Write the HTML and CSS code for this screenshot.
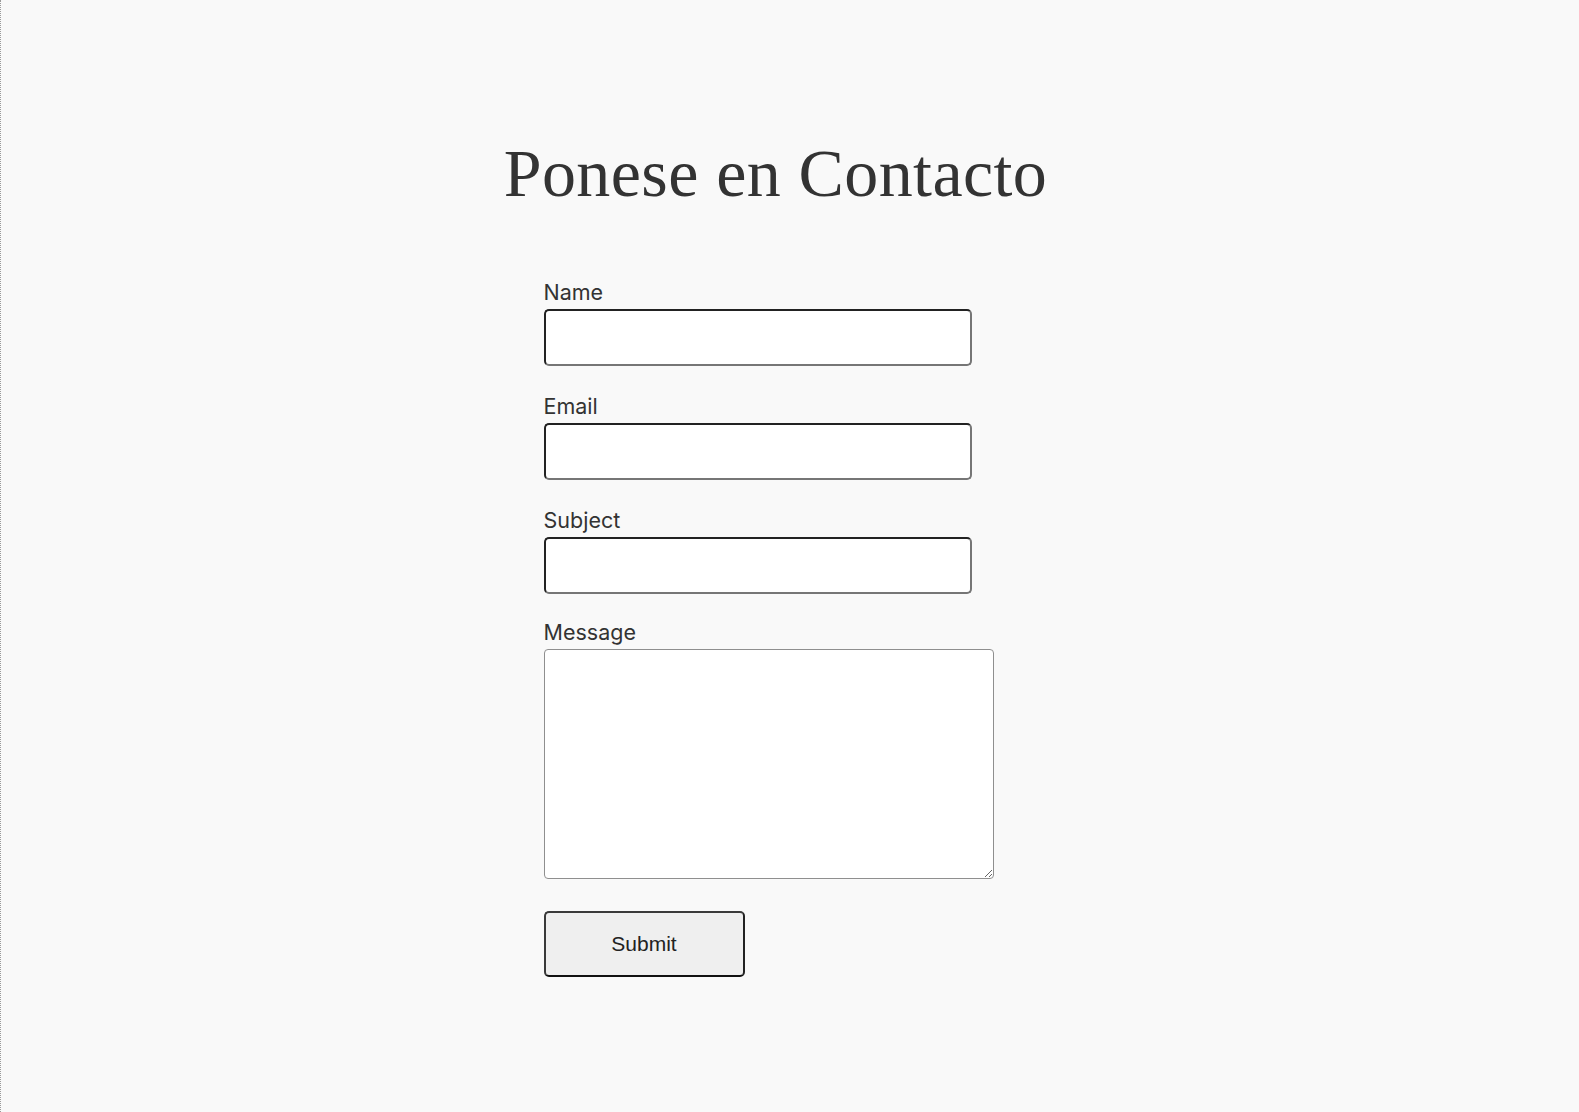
FILE: index.html
```html
<!DOCTYPE html>
<html lang="es">
<head>
<meta charset="utf-8">
<title>Contacto</title>
<link rel="stylesheet" href="styles.css">
</head>
<body>
<main class="page">
  <h1 class="title">Ponese en Contacto</h1>
  <form class="form">
    <div class="field">
      <label class="label" for="name">Name</label>
      <input class="input" id="name" type="text">
    </div>
    <div class="field">
      <label class="label" for="email">Email</label>
      <input class="input" id="email" type="email">
    </div>
    <div class="field field-tight">
      <label class="label" for="subject">Subject</label>
      <input class="input" id="subject" type="text">
    </div>
    <div class="field field-last">
      <label class="label" for="message">Message</label>
      <textarea class="textarea" id="message"></textarea>
    </div>
    <button class="submit" type="submit">Submit</button>
  </form>
</main>
</body>
</html>
```
FILE: styles.css
```css
html, body {
  margin: 0;
  padding: 0;
  height: 100%;
}
body {
  background: #f9f9f9;
  border-left: 1px dotted #9a9a9a;
  box-sizing: border-box;
  color: #333;
}
.page {
  width: 500px;
  margin: 0 auto;
  padding: 134px 29px 0 0;
  display: flex;
  flex-direction: column;
}
.title {
  align-self: center;
  margin: 0;
  white-space: nowrap;
  font-family: "Liberation Serif", serif;
  font-weight: 400;
  font-size: 68px;
  line-height: 78px;
  letter-spacing: 0.4px;
  text-align: center;
  color: #333;
}
.form {
  margin-top: 69px;
  padding-left: 18px;
  display: flex;
  flex-direction: column;
}
.field {
  display: flex;
  flex-direction: column;
  align-items: flex-start;
  gap: 6px;
  margin-bottom: 29px;
}
.field-tight {
  margin-bottom: 27px;
}
.field-last {
  margin-bottom: 32px;
}
.label {
  font-family: Inter, "Noto Sans", sans-serif;
  font-size: 21.5px;
  line-height: 22px;
  color: #333;
}
.input {
  box-sizing: border-box;
  width: 428px;
  height: 57px;
  margin: 0;
  background: #fff;
  border: 2px solid;
  border-color: #222 #767676 #767676 #222;
  border-radius: 5px;
  outline: none;
}
.textarea {
  box-sizing: border-box;
  width: 450px;
  height: 230px;
  margin: 0;
  background: #fff;
  border: 1px solid #8f8f8f;
  border-radius: 4px;
  resize: both;
}
.submit {
  box-sizing: border-box;
  width: 201px;
  height: 66px;
  background: #efefef;
  border: 2px solid #222;
  border-color: #3a3a3a #222 #111 #3a3a3a;
  border-radius: 5px;
  font-family: "Liberation Sans", Arial, sans-serif;
  font-size: 21px;
  color: #222;
  padding: 0;
}
```
